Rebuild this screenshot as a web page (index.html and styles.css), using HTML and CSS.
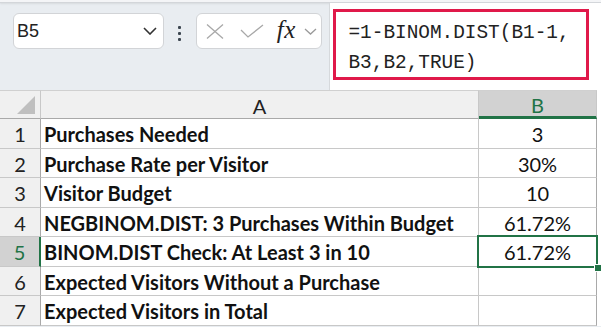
FILE: index.html
```html
<!DOCTYPE html>
<html>
<head>
  <title>BINOM.DIST Check</title>
  <link rel="stylesheet" href="styles.css">
</head>
<body>
  <div class="ribbon-edge"></div>

  <div class="formula-row">
    <div class="name-box">
      <span>B5</span>
      <svg class="chev" width="14" height="8" viewBox="0 0 14 8"><path d="M1 1 L7 7 L13 1" fill="none" stroke="#333" stroke-width="1.6"/></svg>
    </div>
    <div class="dots"><i></i><i></i><i></i></div>
    <div class="fx-box">
      <svg width="18" height="15" viewBox="0 0 18 15"><path d="M1 0.5 L17 14.5 M17 0.5 L1 14.5" stroke="#a8a8a8" stroke-width="1.3" fill="none"/></svg>
      <svg width="24" height="14" viewBox="0 0 24 14"><path d="M1 6 L8 13 L23 1" stroke="#a8a8a8" stroke-width="1.3" fill="none"/></svg>
      <span class="fx">fx</span>
      <svg width="13" height="7" viewBox="0 0 13 7"><path d="M1 1 L6.5 6 L12 1" fill="none" stroke="#9a9a9a" stroke-width="1.3"/></svg>
    </div>
    <div class="formula-bar">
      <div class="formula">=1-BINOM.DIST(B1-1,<br>B3,B2,TRUE)</div>
    </div>
  </div>

  <div class="sheet">
    <div class="corner"><span class="tri"></span></div>
    <div class="colhead">A</div>
    <div class="colhead active">B</div>
    <div class="edge"></div>

    <div class="rowhead">1</div>
    <div class="cell label">Purchases Needed</div>
    <div class="cell num">3</div>
    <div class="edge"></div>

    <div class="rowhead">2</div>
    <div class="cell label">Purchase Rate per Visitor</div>
    <div class="cell num">30%</div>
    <div class="edge"></div>

    <div class="rowhead">3</div>
    <div class="cell label">Visitor Budget</div>
    <div class="cell num">10</div>
    <div class="edge"></div>

    <div class="rowhead">4</div>
    <div class="cell label">NEGBINOM.DIST: 3 Purchases Within Budget</div>
    <div class="cell num">61.72%</div>
    <div class="edge"></div>

    <div class="rowhead active">5</div>
    <div class="cell label">BINOM.DIST Check: At Least 3 in 10</div>
    <div class="cell num selected">61.72%<span class="handle"></span></div>
    <div class="edge"></div>

    <div class="rowhead">6</div>
    <div class="cell label">Expected Visitors Without a Purchase</div>
    <div class="cell num"></div>
    <div class="edge"></div>

    <div class="rowhead">7</div>
    <div class="cell label">Expected Visitors in Total</div>
    <div class="cell num"></div>
    <div class="edge"></div>
  </div>
</body>
</html>
```

FILE: styles.css
```css
body {
  margin: 0;
  width: 601px;
  height: 327px;
  overflow: hidden;
  background-color: #e9edf1;
  font-family: "Liberation Sans", Arial, sans-serif;
}

.ribbon-edge {
  height: 2px;
  background-color: #f4f5f7;
  border-bottom: 1px solid #d3d6da;
  box-shadow: 0 1px 2px rgba(0, 0, 0, 0.08);
}

.formula-row {
  display: flex;
  height: 87px;
  position: relative;
}

.name-box {
  box-sizing: border-box;
  width: 151px;
  height: 36px;
  margin: 10px 0 0 13px;
  background-color: #fff;
  border: 1px solid #d2d4d7;
  border-radius: 6px;
  display: flex;
  align-items: center;
  justify-content: space-between;
  padding: 0 6px 0 3px;
  font-size: 18px;
  color: #222;
}

.dots {
  width: 32px;
  display: flex;
  flex-direction: column;
  align-items: center;
  gap: 3px;
  padding-top: 23px;
}

.dots i {
  width: 3px;
  height: 3px;
  background-color: #3c4650;
  border-radius: 1px;
}

.fx-box {
  box-sizing: border-box;
  width: 127px;
  height: 36px;
  margin-top: 10px;
  background-color: #fff;
  border: 1px solid #d2d4d7;
  border-radius: 6px;
  display: flex;
  align-items: center;
  padding: 0 4px 0 9px;
}

.fx-box svg:nth-child(1) {
  margin-right: 16px;
}

.fx-box svg:nth-child(2) {
  margin-right: 13px;
}

.fx {
  font-family: "Liberation Serif", "Times New Roman", serif;
  font-style: italic;
  font-size: 25px;
  color: #222;
  margin-right: 8px;
  margin-top: -3px;
  letter-spacing: 0.5px;
}

.formula-bar {
  margin-left: 7px;
  width: 268px;
  background-color: #fff;
  border-left: 1px solid #d6d9dc;
  padding-top: 6px;
  padding-left: 3px;
}

.formula {
  box-sizing: border-box;
  width: 256px;
  height: 71px;
  border: 3px solid #e0194a;
  padding: 6px 0 0 12px;
  font-family: "Liberation Mono", "Courier New", monospace;
  font-size: 19.4px;
  line-height: 30px;
  color: #222;
}

.sheet {
  display: grid;
  grid-template-columns: 41px 438px 118px 4px;
  grid-template-rows: 29px repeat(7, 29.5px);
  background-color: #fff;
}

.corner,
.colhead,
.rowhead,
.cell {
  box-sizing: border-box;
  border-right: 1px solid #c8c8c8;
  border-bottom: 1px solid #c8c8c8;
}

.corner,
.colhead {
  border-top: 1px solid #d0d0d0;
  background-color: #f0f0f0;
  border-bottom-color: #a9a9a9;
}

.corner {
  position: relative;
}

.tri {
  position: absolute;
  right: 5px;
  bottom: 4px;
  width: 0;
  height: 0;
  border-left: 18px solid transparent;
  border-bottom: 18px solid #bfbfbf;
}

.colhead {
  display: flex;
  align-items: center;
  justify-content: center;
  padding-top: 2px;
  font-family: "Lato", sans-serif;
  font-size: 20px;
  color: #222;
}

.colhead.active {
  background-color: #d2d2d2;
  color: #217346;
  border-bottom: 3px solid #217346;
}

.rowhead {
  display: flex;
  align-items: center;
  justify-content: center;
  padding-top: 2px;
  background-color: #f0f0f0;
  font-family: "Lato", sans-serif;
  font-size: 20px;
  color: #222;
  border-right-color: #a9a9a9;
}

.rowhead.active {
  background-color: #d2d2d2;
  color: #217346;
  border-right: 2px solid #217346;
}

.cell {
  display: flex;
  align-items: center;
  padding-top: 2px;
  font-family: "Lato", sans-serif;
  font-size: 20px;
  color: #111;
  white-space: nowrap;
}

.cell.label {
  font-weight: bold;
  padding-left: 3px;
}

.cell.num {
  justify-content: center;
  border-right-color: #a9a9a9;
}

.cell.selected {
  position: relative;
}

.cell.selected::before {
  content: "";
  position: absolute;
  left: -2px;
  top: -2px;
  right: -2px;
  bottom: -2px;
  border: 2px solid #217346;
}

.handle {
  position: absolute;
  right: -6px;
  bottom: -6px;
  width: 6px;
  height: 6px;
  background-color: #217346;
  border: 1px solid #fff;
}

.edge {
  background-color: #fff;
}
```
